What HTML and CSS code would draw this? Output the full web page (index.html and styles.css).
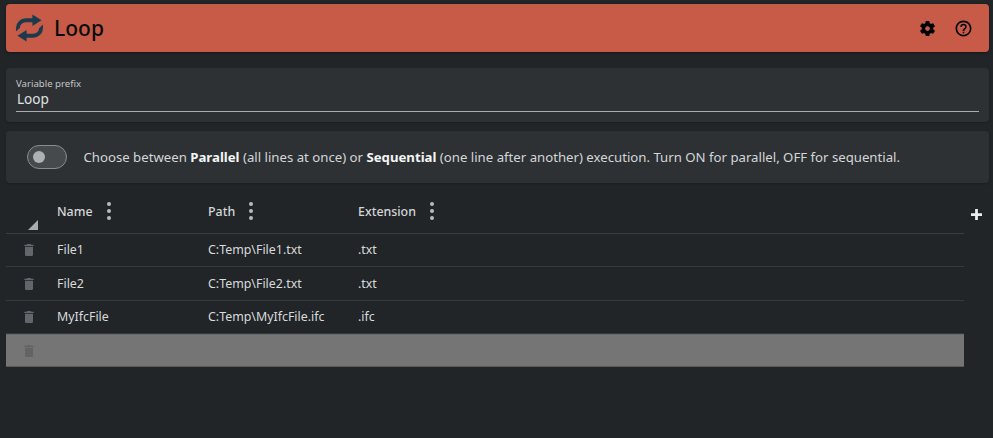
FILE: index.html
```html
<!DOCTYPE html>
<html lang="en">
<head>
<meta charset="utf-8">
<title>Loop</title>
<link rel="stylesheet" href="styles.css">
</head>
<body>
<header class="titlebar">
  <svg class="loop-icon" viewBox="0 0 30 30"><path d="M18 1L27.500 7L18 13V9H11A6 6 0 0 0 5 15L1 18.500V15A10 10 0 0 1 11 5H18Z"/><path d="M12 29L2.500 23L12 17V21H19A6 6 0 0 0 25 15L29 11.500V15A10 10 0 0 1 19 25H12Z"/></svg>
  <h1 class="title">Loop</h1>
  <svg class="tool-icon gear" viewBox="0 0 24 24"><path d="M19.140 12.940c.04-.3.060-.61.060-.94 0-.32-.02-.64-.070-.94l2.030-1.580a.49.49 0 0 0 .12-.61l-1.920-3.320a.49.49 0 0 0-.59-.22l-2.390.96a7 7 0 0 0-1.620-.94l-.36-2.540a.48.48 0 0 0-.48-.41h-3.840a.48.48 0 0 0-.47.41l-.36 2.540c-.59.24-1.130.57-1.620.94l-2.390-.96a.49.49 0 0 0-.59.22L2.740 8.870a.48.48 0 0 0 .12.61l2.030 1.580c-.05.3-.09.63-.09.94s.02.64.070.94l-2.030 1.580a.49.49 0 0 0-.12.61l1.920 3.320c.12.22.37.29.59.22l2.390-.96c.5.380 1.030.7 1.620.94l.36 2.540c.05.24.24.41.48.41h3.840c.24 0 .44-.17.47-.41l.36-2.540a6.900 6.900 0 0 0 1.620-.94l2.390.96c.22.080.47 0 .59-.22l1.920-3.320a.48.48 0 0 0-.12-.61l-2.010-1.580zM12 15a3 3 0 1 1 0-6 3 3 0 0 1 0 6z"/></svg>
  <svg class="tool-icon help" viewBox="0 0 24 24"><path d="M11 18h2v-2h-2v2zm1-16C6.480 2 2 6.480 2 12s4.480 10 10 10 10-4.480 10-10S17.520 2 12 2zm0 18c-4.410 0-8-3.590-8-8s3.590-8 8-8 8 3.590 8 8-3.590 8-8 8zm0-14a4 4 0 0 0-4 4h2c0-1.100.9-2 2-2s2 .9 2 2c0 2-3 1.750-3 5h2c0-2.250 3-2.500 3-5a4 4 0 0 0-4-4z"/></svg>
</header>

<section class="panel prefix-panel">
  <label class="field-label">Variable prefix</label>
  <div class="field-value">Loop</div>
</section>

<section class="panel switch-panel">
  <span class="switch"><span class="knob"></span></span>
  <p class="switch-text">Choose between <b>Parallel</b> (all lines at once) or <b>Sequential</b> (one line after another) execution. Turn ON for parallel, OFF for sequential.</p>
</section>

<div class="table-area">
  <div class="table">
    <div class="row head">
      <div class="cell-del"><span class="sort"></span></div>
      <div class="cell c-name">Name<span class="dots"><i></i><i></i><i></i></span></div>
      <div class="cell c-path">Path<span class="dots"><i></i><i></i><i></i></span></div>
      <div class="cell">Extension<span class="dots"><i></i><i></i><i></i></span></div>
    </div>
    <div class="row">
      <div class="cell-del"><svg class="trash" viewBox="0 0 24 24"><path d="M6 19a2 2 0 0 0 2 2h8a2 2 0 0 0 2-2V7H6v12zM19 4h-3.500l-1-1h-5l-1 1H5v2h14V4z"/></svg></div>
      <div class="cell c-name">File1</div><div class="cell c-path">C:Temp\File1.txt</div><div class="cell">.txt</div>
    </div>
    <div class="row">
      <div class="cell-del"><svg class="trash" viewBox="0 0 24 24"><path d="M6 19a2 2 0 0 0 2 2h8a2 2 0 0 0 2-2V7H6v12zM19 4h-3.500l-1-1h-5l-1 1H5v2h14V4z"/></svg></div>
      <div class="cell c-name">File2</div><div class="cell c-path">C:Temp\File2.txt</div><div class="cell">.txt</div>
    </div>
    <div class="row">
      <div class="cell-del"><svg class="trash" viewBox="0 0 24 24"><path d="M6 19a2 2 0 0 0 2 2h8a2 2 0 0 0 2-2V7H6v12zM19 4h-3.500l-1-1h-5l-1 1H5v2h14V4z"/></svg></div>
      <div class="cell c-name">MyIfcFile</div><div class="cell c-path">C:Temp\MyIfcFile.ifc</div><div class="cell">.ifc</div>
    </div>
    <div class="row selected">
      <div class="cell-del"><svg class="trash" viewBox="0 0 24 24"><path d="M6 19a2 2 0 0 0 2 2h8a2 2 0 0 0 2-2V7H6v12zM19 4h-3.500l-1-1h-5l-1 1H5v2h14V4z"/></svg></div>
    </div>
  </div>
  <svg class="plus" viewBox="0 0 12 12"><path d="M4.500 0h3v4.500H12v3H7.500V12h-3V7.500H0v-3h4.500z"/></svg>
</div>
</body>
</html>
```
FILE: styles.css
```css
* { box-sizing: border-box; }
html, body { height: 100%; }
body {
  margin: 0;
  padding: 4px 4px 0 6px;
  background: #212528;
  color: #e0e2e3;
  font-family: "Noto Sans", "Open Sans", sans-serif;
  font-size: 13px;
  overflow: hidden;
}
.titlebar {
  display: flex;
  align-items: center;
  height: 48px;
  background: #c75b47;
  border-radius: 4px;
  padding: 0 16px 0 9px;
  box-shadow: 0 1px 3px rgba(0,0,0,.35);
}
.loop-icon { width: 29px; height: 30px; fill: #1c3a4d; }
.title {
  margin: 0 0 0 10px;
  flex: 1;
  font-size: 21px;
  font-weight: 500;
  line-height: 48px;
  color: #0b0b0b;
}
.tool-icon { width: 18px; height: 18px; fill: #000; }
.gear { margin-right: 17px; width: 19px; height: 19px; }
.help { width: 19px; height: 19px; }
.panel {
  background: #2d3134;
  border-radius: 4px;
  box-shadow: 0 1px 2px rgba(0,0,0,.2);
}
.prefix-panel {
  margin-top: 16px;
  height: 54px;
  padding: 9px 10px 0 10px;
}
.field-label {
  display: block;
  font-size: 9.600px;
  line-height: 14px;
  color: #c4c6c8;
}
.field-value {
  font-size: 13.600px;
  line-height: 16px;
  padding: 0 0 4px 1px;
  height: 21px;
  color: #e0e2e3;
  border-bottom: 1px solid #a9abad;
}
.switch-panel {
  display: flex;
  align-items: center;
  margin-top: 9px;
  height: 52px;
  padding: 0 0 0 21px;
}
.switch {
  display: flex;
  align-items: center;
  width: 40px;
  height: 24px;
  border: 1px solid #8a8d8f;
  border-radius: 12px;
  background: #474a4d;
  padding-left: 5px;
}
.knob { width: 12px; height: 12px; border-radius: 50%; background: #aeb0b2; }
.switch-text {
  margin: 0 0 0 16.500px;
  font-size: 13.200px;
  line-height: 18px;
  color: #d4d6d8;
  white-space: nowrap;
}
.switch-text b { color: #f4f5f5; font-weight: 700; }
.table-area { display: flex; align-items: flex-start; }
.table { width: 958px; }
.row {
  display: flex;
  align-items: center;
  height: 33.400px;
  border-bottom: 1px solid #36393d;
  font-size: 12.400px;
  color: #d8dadc;
}
.head {
  height: 51px;
  align-items: flex-start;
  padding-top: 20px;
  font-weight: 500;
  color: #d4d6d8;
  border-bottom-color: #3a3d41;
  position: relative;
}
.cell-del { width: 51px; display: flex; justify-content: center; padding-right: 5px; flex: none; }
.cell { display: flex; align-items: center; line-height: 18px; }
.c-name { width: 151px; }
.c-path { width: 150px; }
.dots { display: flex; flex-direction: column; gap: 3px; margin-left: 14px; margin-top: -2px; }
.dots i { width: 4px; height: 4px; border-radius: 50%; background: #b9bbbd; display: block; }
.sort {
  position: absolute;
  left: 22px;
  bottom: 3px;
  width: 0;
  height: 0;
  border-style: solid;
  border-width: 0 0 10px 10px;
  border-color: transparent transparent #a9abad transparent;
}
.trash { width: 16px; height: 16px; fill: #63666a; }
.selected { height: 33px; background: #757575; border-top: 1px solid #6a6a6a; border-bottom-color: #5a5a5a; }
.selected .trash { fill: #636363; }
.plus { width: 11px; height: 11px; fill: #eceded; margin: 26px 0 0 7px; flex: none; }
```
